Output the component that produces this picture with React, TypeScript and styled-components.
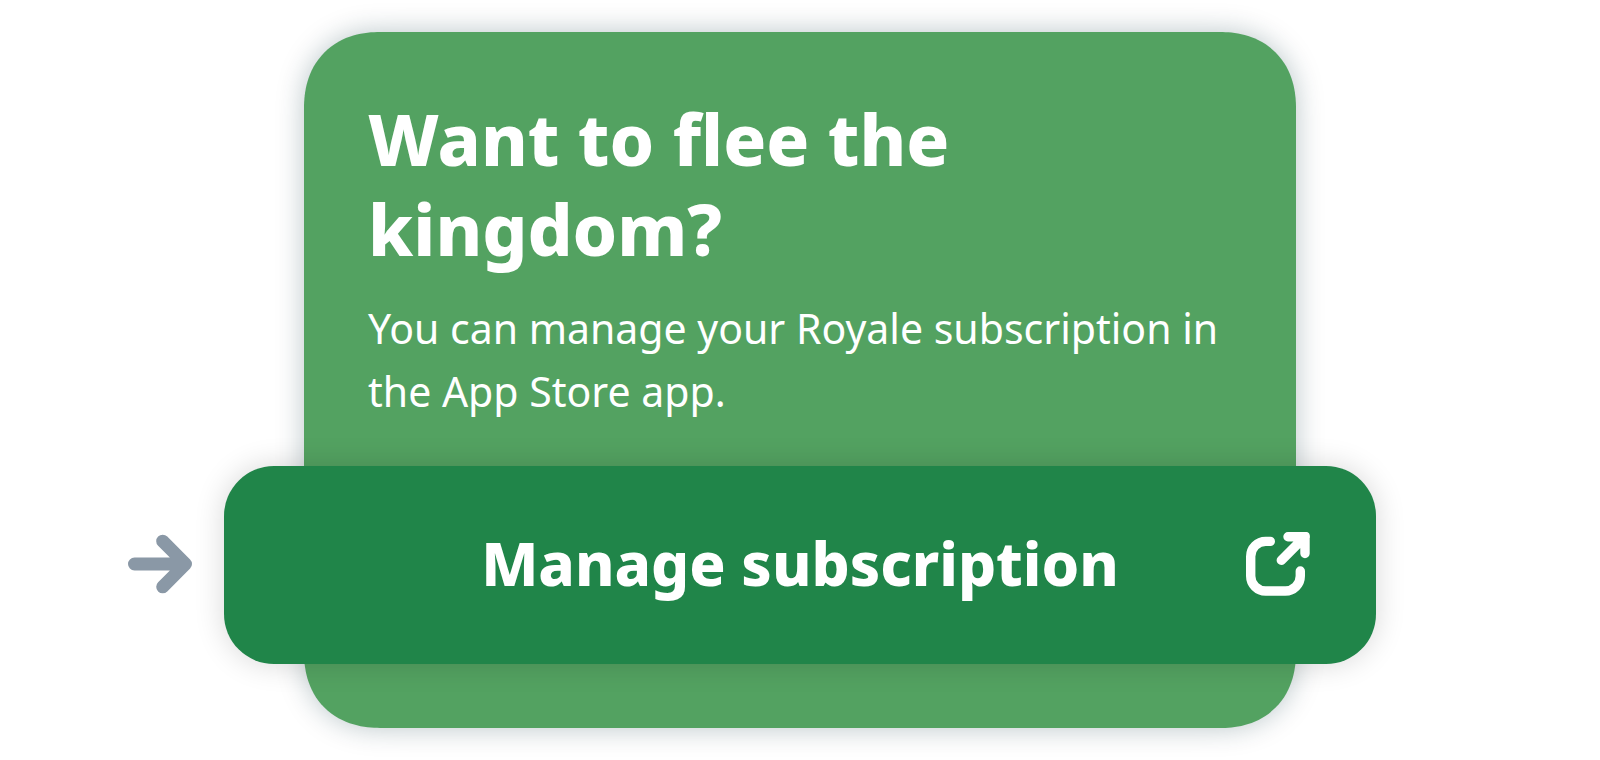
import React from "react";
import styled, { createGlobalStyle } from "styled-components";

const GlobalStyle = createGlobalStyle`
  *, *::before, *::after { box-sizing: border-box; }
  body {
    margin: 0;
    background: #ffffff;
    font-family: "Noto Sans", "Open Sans", sans-serif;
    overflow-x: hidden;
  }
`;

const Page = styled.main`
  display: flex;
  justify-content: center;
  padding: 32px 0;
`;

const Card = styled.section`
  width: 62%;
  padding: 62px 0 64px;
  border-radius: 64px;
  background: #53a261;
  box-shadow: 0 0 28px rgba(0, 48, 58, 0.28);
  color: #ffffff;

  @supports (corner-shape: superellipse(1.15)) {
    border-radius: 76px;
    corner-shape: superellipse(1.15);
  }
`;

const Copy = styled.div`
  display: flex;
  flex-direction: column;
  gap: 23px;
  padding: 0 64px;
`;

const Title = styled.h1`
  margin: 0;
  font-size: 71px;
  font-weight: 800;
  line-height: 90px;
`;

const Text = styled.p`
  margin: 0;
  font-size: 41px;
  font-weight: 400;
  line-height: 63px;
`;

const ActionRow = styled.div`
  display: flex;
  align-items: center;
  gap: 32px;
  margin: 43px -80px 0 -176px;
`;

const ManageButton = styled.button`
  flex: 1;
  display: grid;
  grid-template-columns: 64px 1fr 64px;
  align-items: center;
  height: 198px;
  padding: 0 66px 2px;
  border: 0;
  border-radius: 50px;
  background: #208549;
  box-shadow: 0 0 30px rgba(0, 0, 0, 0.16);
  color: #ffffff;
  font: inherit;
  cursor: pointer;
`;

const ButtonLabel = styled.span`
  grid-column: 2;
  padding-bottom: 2px;
  font-size: 60px;
  font-weight: 800;
  line-height: 80px;
  text-align: center;
  white-space: nowrap;
`;

const Icon = styled.svg<{ $color: string; $weight: number }>`
  flex: none;
  width: 64px;
  height: 64px;
  fill: none;
  stroke: ${(p) => p.$color};
  stroke-width: ${(p) => p.$weight};
  stroke-linecap: round;
  stroke-linejoin: round;
`;

export default function App() {
  return (
    <>
      <GlobalStyle />
      <Page>
        <Card>
          <Copy>
            <Title>Want to flee the kingdom?</Title>
            <Text>You can manage your Royale subscription in the App Store app.</Text>
          </Copy>
          <ActionRow>
            <Icon viewBox="0 0 64 64" $color="#8a98a6" $weight={13} aria-hidden="true">
              <path d="M6.5 31H54M34.7 8.2L57.5 31L34.7 53.8" />
            </Icon>
            <ManageButton type="button">
              <ButtonLabel>Manage subscription</ButtonLabel>
              <Icon viewBox="0 0 64 64" $color="#ffffff" $weight={9.4} aria-hidden="true">
                <path d="M24.3 9.4H19.7A15 15 0 0 0 4.7 24.4V44A15 15 0 0 0 19.7 59H39.3A15 15 0 0 0 54.3 44V39" />
                <path d="M42 4.7H59V21.5M59 4.7L35.3 28.3" />
                <path d="M58 0H60Q63.7 0 63.7 3.7V6L60 4Z" fill="#ffffff" stroke="none" />
              </Icon>
            </ManageButton>
          </ActionRow>
        </Card>
      </Page>
    </>
  );
}
